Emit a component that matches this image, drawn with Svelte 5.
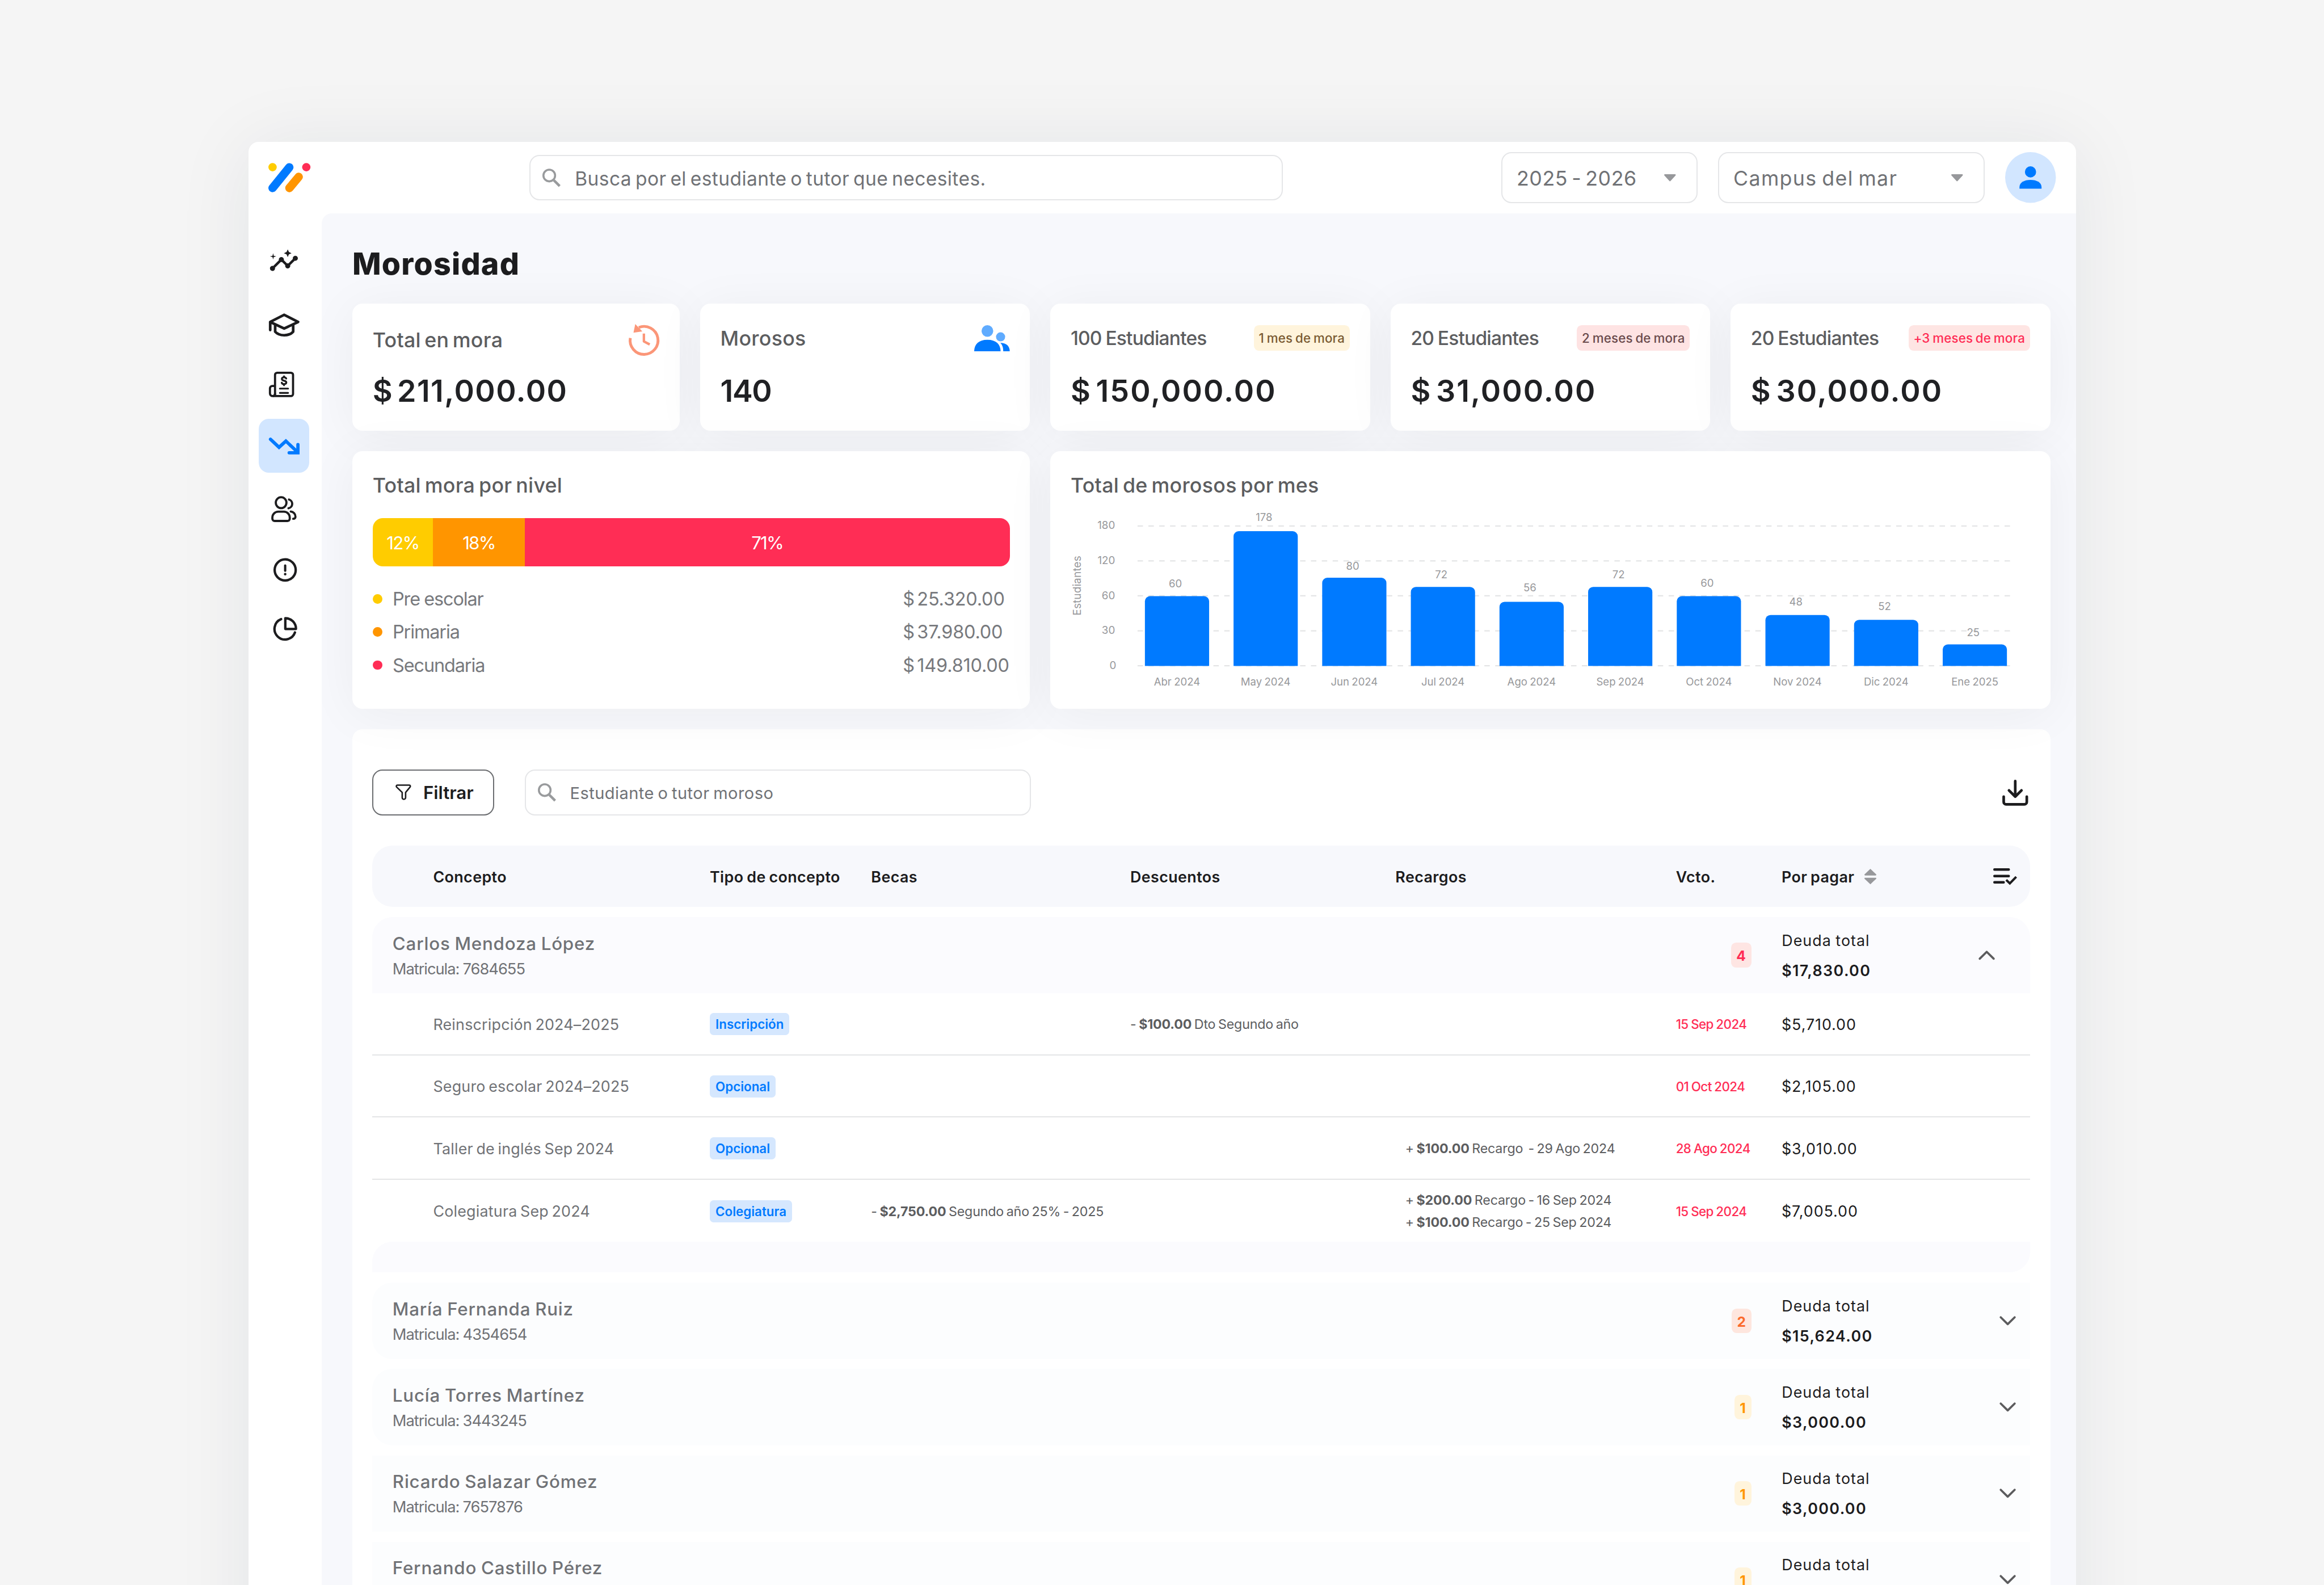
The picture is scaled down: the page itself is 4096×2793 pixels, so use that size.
<script lang="ts">
  /**
   * Morosidad: overdue payments dashboard.
   * Sizes are in rem, where 1rem = 10 design units.
   */
  interface Charge {
    concept: string;
    type: string;
    scholarship?: [string, string];
    discount?: [string, string];
    surcharges?: [string, string][];
    due: string;
    amount: string;
  }

  interface Debtor {
    name: string;
    id: string;
    count: number;
    level: 'high' | 'mid' | 'low';
    total: string;
    shape: 'open' | 'left' | 'square';
    charges?: Charge[];
  }

  const navItems = [
    { name: 'insights', viewBox: '0.2 1.9 24 24' },
    { name: 'students', viewBox: '0.1 -3.7 24 24' },
    { name: 'billing', viewBox: '0.1 -1.7 24 24' },
    { name: 'overdue', viewBox: '0.15 -5.35 24 24' },
    { name: 'users', viewBox: '-1.9 -3.75 24 24' },
    { name: 'alerts', viewBox: '-3.5 -4.8 24 24' },
    { name: 'reports', viewBox: '-3.5 -2.7 24 24' }
  ];
  const active = 'overdue';

  const buckets = [
    { students: '100 Estudiantes', badge: '1 mes de mora', tone: 'low', value: '$ 150,000.00' },
    { students: '20 Estudiantes', badge: '2 meses de mora', tone: 'mid', value: '$ 31,000.00' },
    { students: '20 Estudiantes', badge: '+3 meses de mora', tone: 'high', value: '$ 30,000.00' }
  ];

  const levels = [
    { name: 'Pre escolar', share: '12%', width: 9.48, color: '#ffcc00', value: '$ 25.320.00' },
    { name: 'Primaria', share: '18%', width: 14.38, color: '#ff9500', value: '$ 37.980.00' },
    { name: 'Secundaria', share: '71%', width: 76.14, color: '#ff2d55', value: '$ 149.810.00' }
  ];

  const ticks = [180, 120, 60, 30, 0];
  const months = [
    { label: 'Abr 2024', value: 60, height: 55, lift: 7 },
    { label: 'May 2024', value: 178, height: 106.2, lift: 7.9 },
    { label: 'Jun 2024', value: 80, height: 69.5, lift: 6.4 },
    { label: 'Jul 2024', value: 72, height: 62.3, lift: 6.8 },
    { label: 'Ago 2024', value: 56, height: 50.6, lift: 8 },
    { label: 'Sep 2024', value: 72, height: 62.3, lift: 6.8 },
    { label: 'Oct 2024', value: 60, height: 55, lift: 7.2 },
    { label: 'Nov 2024', value: 48, height: 40.2, lift: 7.5 },
    { label: 'Dic 2024', value: 52, height: 36.4, lift: 7.8 },
    { label: 'Ene 2025', value: 25, height: 17, lift: 6.6 }
  ];
  const baseY = 130.8;
  const barX = (i: number) => 58.5 + i * 69.85;
  const barPath = (x: number, h: number) =>
    `M${x} ${baseY}V${baseY - h + 4}a4 4 0 0 1 4-4h42.6a4 4 0 0 1 4 4V${baseY}z`;

  const debtors: Debtor[] = [
    {
      name: 'Carlos Mendoza López',
      id: '7684655',
      count: 4,
      level: 'high',
      total: '$17,830.00',
      shape: 'open',
      charges: [
        { concept: 'Reinscripción 2024–2025', type: 'Inscripción', discount: ['$100.00', 'Dto Segundo año'], due: '15 Sep 2024', amount: '$5,710.00' },
        { concept: 'Seguro escolar 2024–2025', type: 'Opcional', due: '01 Oct 2024', amount: '$2,105.00' },
        { concept: 'Taller de inglés Sep 2024', type: 'Opcional', surcharges: [['$100.00', 'Recargo  - 29 Ago 2024']], due: '28 Ago 2024', amount: '$3,010.00' },
        {
          concept: 'Colegiatura Sep 2024',
          type: 'Colegiatura',
          scholarship: ['$2,750.00', 'Segundo año 25% - 2025'],
          surcharges: [['$200.00', 'Recargo - 16 Sep 2024'], ['$100.00', 'Recargo - 25 Sep 2024']],
          due: '15 Sep 2024',
          amount: '$7,005.00'
        }
      ]
    },
    { name: 'María Fernanda Ruiz', id: '4354654', count: 2, level: 'mid', total: '$15,624.00', shape: 'left' },
    { name: 'Lucía Torres Martínez', id: '3443245', count: 1, level: 'low', total: '$3,000.00', shape: 'left' },
    { name: 'Ricardo Salazar Gómez', id: '7657876', count: 1, level: 'low', total: '$3,000.00', shape: 'square' },
    { name: 'Fernando Castillo Pérez', id: '7657321', count: 1, level: 'low', total: '$3,000.00', shape: 'square' }
  ];
</script>

{#snippet searchIcon()}
  <svg class="icon-search" viewBox="0 0 14.4 14.4" fill="none" stroke="currentColor">
    <circle cx="5.4" cy="5.5" r="4.6" stroke-width="1.6" />
    <path d="M9 9.2l4.6 4.6" stroke-width="2" />
  </svg>
{/snippet}

{#snippet caret()}
  <svg class="icon-caret" viewBox="0 0 9.2 5.6" fill="currentColor">
    <path d="M.6 0h8c.5 0 .8.6.4 1L5.1 5.3a.7.7 0 0 1-1 0L.2 1C-.2.6.1 0 .6 0z" />
  </svg>
{/snippet}

<div class="page">
  <div class="shell">
    <header class="topbar">
      <svg class="logo" viewBox="0 0 33.2 23.2" fill="none" stroke-linecap="round" stroke-width="6.6">
        <circle cx="3.3" cy="3.4" r="3.3" fill="#ffcc00" />
        <path d="M16.5 3.5L3.3 19.8" stroke="#007aff" />
        <path d="M23.9 11L16.6 19.8" stroke="#ff9500" />
        <circle cx="29.9" cy="3.4" r="3.3" fill="#ff2d55" />
      </svg>
      <div class="field search">
        {@render searchIcon()}
        <span>Busca por el estudiante o tutor que necesites.</span>
      </div>
      <div class="topbar-right">
        <div class="field select year"><span>2025 - 2026</span>{@render caret()}</div>
        <div class="field select campus"><span>Campus del mar</span>{@render caret()}</div>
        <svg class="avatar" viewBox="0 0 40 40">
          <circle cx="20" cy="20" r="20" fill="#d2e6ff" />
          <circle cx="20" cy="15.6" r="4.4" fill="#007aff" />
          <path d="M11.3 28.8v-1.2c0-3.6 3.7-5.7 8.7-5.7s8.7 2.1 8.7 5.7v1.2z" fill="#007aff" />
        </svg>
      </div>
    </header>

    <div class="body">
      <nav class="sidebar">
        {#each navItems as item}
          <div class="nav-item" class:active={item.name === active}>
            <svg viewBox={item.viewBox} fill="none" stroke="currentColor" stroke-linecap="round">
              {#if item.name === 'insights'}
                <g fill="currentColor" stroke="none">
                  <path d="M21 8c-1.45 0-2.26 1.44-1.93 2.51l-3.55 3.56c-.3-.09-.74-.09-1.04 0l-2.55-2.55C12.27 10.45 11.46 9 10 9c-1.45 0-2.27 1.44-1.93 2.52l-4.56 4.55C2.44 15.74 1 16.55 1 18c0 1.1.9 2 2 2 1.45 0 2.26-1.44 1.93-2.51l4.55-4.56c.3.09.74.09 1.04 0l2.55 2.55C12.73 16.55 13.54 18 15 18c1.45 0 2.27-1.44 1.93-2.52l3.56-3.55C21.56 12.26 23 11.45 23 10c0-1.1-.9-2-2-2z" />
                  <path d="M15 9l.94-2.07L18 6l-2.06-.93L15 3l-.92 2.07L12 6l2.08.93z" />
                  <path d="M3.5 11L4 9l2-.5L4 8l-.5-2L3 8l-2 .5L3 9z" />
                </g>
              {:else if item.name === 'students'}
                <g stroke-width="2.1" stroke-linejoin="round">
                  <path d="M12.1 1.1L23.1 6.7 12.1 11.9 1.1 6.7zM1.1 6.9v6.2" />
                  <path d="M5 9v5.4c1.6 1.8 4 2.8 7.1 2.8s5.5-1 7.1-2.8V9" stroke-linecap="butt" />
                </g>
              {:else if item.name === 'billing'}
                <g stroke-width="1.7" stroke-linejoin="round">
                  <path d="M4.9 19.2V2.6A1.7 1.7 0 0 1 6.6.9h10.8a1.7 1.7 0 0 1 1.7 1.7v15a1.7 1.7 0 0 1-1.7 1.7H3a2.1 2.1 0 0 1-2.1-2.1v-4a1.9 1.9 0 0 1 1.9-1.9h2.1" />
                  <path d="M4.9 17.5a2 2 0 0 1-1.2 1.7" />
                  <path d="M8.7 13.4h6.5M8.7 16.8h6.5" stroke-width="1.4" />
                  <path d="M13.7 5.4c-.3-.6-.9-.9-1.7-.9-1 0-1.7.5-1.7 1.3 0 1.9 3.5.9 3.5 2.8 0 .8-.8 1.3-1.8 1.3-.9 0-1.6-.4-1.8-1.1M12 3.7v.8M12 9.9v.8" stroke-width="1.5" />
                </g>
              {:else if item.name === 'overdue'}
                <g stroke-width="2.6">
                  <path d="M1.4 1.4L8.1 7.7l5.4-4.9L22.7 11.5" />
                  <path d="M23 5.6V12H16.1" />
                </g>
              {:else if item.name === 'users'}
                <g stroke-width="1.7">
                  <ellipse cx="7.7" cy="5.1" rx="4.2" ry="4.3" />
                  <path d="M13.9 2.6a3.55 3.55 0 0 1-.4 6.9" />
                  <path d="M5.4 12.2h4.5a4.6 4.6 0 0 1 4.6 4.6v.9a1.8 1.8 0 0 1-1.8 1.8H2.6a1.8 1.8 0 0 1-1.8-1.8v-.9a4.6 4.6 0 0 1 4.6-4.6z" />
                  <path d="M15.3 12.1a4 4 0 0 1 3.7 4v.2a1.5 1.5 0 0 1-1.5 1.5h-.3" />
                </g>
              {:else if item.name === 'alerts'}
                <circle cx="9.3" cy="9.2" r="8.3" stroke-width="1.9" />
                <path d="M9.3 5.7v4.1" stroke-width="1.8" />
                <circle cx="9.3" cy="12.5" r="1" fill="currentColor" stroke="none" />
              {:else}
                <g stroke-width="1.9">
                  <path d="M6.1 1.8A8.3 8.3 0 1 0 17 12.3" />
                  <path d="M9.4 1v8.5h8.4A8.4 8.4 0 0 0 9.4 1z" stroke-linejoin="round" />
                </g>
              {/if}
            </svg>
          </div>
        {/each}
      </nav>

      <main class="content">
        <h1>Morosidad</h1>

        <section class="summary">
          <div class="stats">
            <div class="card stat">
              <div class="card-head">
                <span class="label">Total en mora</span>
                <svg class="icon-history" viewBox="0 0 24.4 25.2" fill="none" stroke="#fb9678">
                  <path d="M1.3 11A11 11 0 1 0 8 2.7" stroke-width="2.2" />
                  <path d="M5.2 0l5.6 5.8-7 1z" fill="#fb9678" stroke="none" />
                  <path d="M12 7.5v6.2l4.6 2.4" stroke-width="1.9" stroke-linejoin="round" />
                </svg>
              </div>
              <div class="value">$ 211,000.00</div>
            </div>
            <div class="card stat">
              <div class="card-head">
                <span class="label">Morosos</span>
                <svg class="icon-people" viewBox="0 0 28.1 20.6">
                  <circle cx="10.4" cy="4.6" r="4.6" fill="#5fabff" />
                  <circle cx="20.8" cy="9.2" r="3.6" fill="#5fabff" />
                  <path d="M0 20.6c0-5.6 3.5-9.1 10.4-9.1s10.4 3.5 10.4 9.1z" fill="#007aff" />
                  <path d="M20.6 13.9c4.7.2 7.4 2.4 7.4 6.7h-5.1c0-3-.7-5-2.3-6.7z" fill="#007aff" />
                </svg>
              </div>
              <div class="value count">140</div>
            </div>
          </div>

          <div class="buckets">
            {#each buckets as b}
              <div class="card bucket">
                <div class="card-head">
                  <span class="label">{b.students}</span>
                  <span class="badge {b.tone}">{b.badge}</span>
                </div>
                <div class="value">{b.value}</div>
              </div>
            {/each}
          </div>

          <div class="card level-card">
            <h2>Total mora por nivel</h2>
            <div class="level-bar">
              {#each levels as l}
                <div class="segment" style="width: {l.width}%; background: {l.color}">{l.share}</div>
              {/each}
            </div>
            <ul class="legend">
              {#each levels as l}
                <li>
                  <i style="background: {l.color}"></i>
                  <span class="legend-name">{l.name}</span>
                  <span class="legend-value">{l.value}</span>
                </li>
              {/each}
            </ul>
          </div>

          <div class="card chart-card">
            <h2>Total de morosos por mes</h2>
            <svg class="chart" viewBox="0 0 756 152">
              <text class="axis-title" transform="translate(8.1 67.5) rotate(-90)">Estudiantes</text>
              {#each ticks as tick, i}
                <line x1="52.7" x2="741.7" y1={20.5 + i * 27.52} y2={20.5 + i * 27.52} />
                <text class="tick" x={tick === 0 ? 35.9 : 35} y={23 + i * 27.52}>{tick}</text>
              {/each}
              {#each months as m, i}
                <path d={barPath(barX(i), m.height)} fill="#007aff" />
                <text x={barX(i) + 24} y={baseY - m.height - m.lift}>{m.value}</text>
                <text x={barX(i) + 25.3} y="146.2">{m.label}</text>
              {/each}
            </svg>
          </div>
        </section>

        <section class="panel">
          <div class="toolbar">
            <button class="filter">
              <svg viewBox="0 0 12.4 12.6" fill="none" stroke="currentColor" stroke-width="1.15" stroke-linejoin="round">
                <path d="M1.5.7h9.4c.8 0 1.1.9.6 1.5L8 6.4v4.1c0 .6-.3 1-.8 1.2-.9.4-1.9-.2-1.9-1.2V6.4L.9 2.2C.4 1.6.7.7 1.5.7z" />
              </svg>
              <span>Filtrar</span>
            </button>
            <div class="field table-search">
              {@render searchIcon()}
              <span>Estudiante o tutor moroso</span>
            </div>
            <svg class="icon-download" viewBox="0 0 20.4 20.4" fill="none" stroke="currentColor" stroke-width="2.1" stroke-linecap="round" stroke-linejoin="round">
              <path d="M10.2 1.1v12M5.3 8.4l4.9 4.9 4.9-4.9" />
              <path d="M1.1 13.3v4.2a1.9 1.9 0 0 0 1.9 1.9h14.4a1.9 1.9 0 0 0 1.9-1.9v-4.2" />
            </svg>
          </div>

          <div class="row table-head">
            <span>Concepto</span>
            <span>Tipo de concepto</span>
            <span>Becas</span>
            <span>Descuentos</span>
            <span>Recargos</span>
            <span>Vcto.</span>
            <span class="last-head">
              Por pagar
              <svg class="icon-sort" viewBox="0 0 9.4 12.2" fill="#97989b">
                <path d="M4.7 0l4.5 4.3c.4.4.1.9-.4.9H.6c-.5 0-.8-.5-.4-.9z" />
                <path d="M4.7 12.2L.2 7.9C-.2 7.5.1 7 .6 7h8.2c.5 0 .8.5.4.9z" />
              </svg>
              <svg class="icon-columns" viewBox="0 0 18.4 13" fill="none" stroke="currentColor" stroke-width="2" stroke-linecap="round">
                <path d="M1 1h11.2M1 6.1h11.2M1 11.1h7.2" />
                <path d="M10.9 9.8l2.2 2.1 4.4-4.5" stroke-linecap="square" stroke-width="1.8" />
              </svg>
            </span>
          </div>

          {#each debtors as d}
            <div class="debtor {d.shape}">
              <div class="debtor-info">
                <div class="name">{d.name}</div>
                <div class="enrollment">Matricula: {d.id}</div>
              </div>
              <span class="count-badge {d.level}">{d.count}</span>
              <div class="debt-cell">
                <div class="debt">
                  <div>Deuda total</div>
                  <strong>{d.total}</strong>
                </div>
                <svg class="chevron" viewBox="0 0 13 7.4" fill="none" stroke="#5c5c5e" stroke-width="1.7" stroke-linecap="round" stroke-linejoin="round">
                  <path d={d.charges ? 'M1 6.4L6.5 1 12 6.4' : 'M1 1l5.5 5.4L12 1'} />
                </svg>
              </div>
            </div>
            {#if d.charges}
              {#each d.charges as c}
                <div class="row charge">
                  <span>{c.concept}</span>
                  <span><em class="type">{c.type}</em></span>
                  <span class="note">
                    {#if c.scholarship}<span>- <b>{c.scholarship[0]}</b> {c.scholarship[1]}</span>{/if}
                  </span>
                  <span class="note">
                    {#if c.discount}<span>- <b>{c.discount[0]}</b> {c.discount[1]}</span>{/if}
                  </span>
                  <span class="note surcharges">
                    {#each c.surcharges ?? [] as s}<span>+ <b>{s[0]}</b> {s[1]}</span>{/each}
                  </span>
                  <span class="due">{c.due}</span>
                  <span class="amount">{c.amount}</span>
                </div>
              {/each}
              <div class="group-end"></div>
            {/if}
          {/each}
        </section>
      </main>
    </div>
  </div>
</div>

<style>
  :global(html) {
    font-size: 22.368px;
  }

  :global(body) {
    margin: 0;
    overflow: hidden;
  }

  .page {
    box-sizing: border-box;
    height: 100vh;
    padding: 11.19rem 0 0 19.56rem;
    overflow: hidden;
    background: #f5f5f5;
    font-family: Inter, 'Open Sans', sans-serif;
    color: #1c1c1e;
  }

  .page :global(*) {
    box-sizing: border-box;
  }

  svg {
    display: block;
    flex: none;
    overflow: visible;
  }

  .shell {
    width: 144rem;
    height: 125rem;
    border-radius: 0.8rem;
    background: #fff;
    box-shadow: 0 0.4rem 6rem rgba(25, 40, 60, 0.08);
  }

  /* Top bar */
  .topbar {
    display: flex;
    align-items: center;
    height: 5.6rem;
    padding: 0 1.57rem 0 1.58rem;
  }

  .logo {
    width: 3.32rem;
    height: 2.32rem;
  }

  .field {
    display: flex;
    align-items: center;
    border: 0.1rem solid #e5e6e8;
    border-radius: 0.8rem;
    color: #707276;
    white-space: nowrap;
  }

  .field span {
    padding-top: 0.1rem;
  }

  .search {
    width: 59.35rem;
    height: 3.6rem;
    margin-left: 17.26rem;
    padding-left: 0.95rem;
    gap: 1.1rem;
    font-size: 1.5rem;
    letter-spacing: 0.018rem;
    word-spacing: -0.13rem;
  }

  .icon-search {
    width: 1.44rem;
    height: 1.44rem;
    color: #999b9d;
  }

  .topbar-right {
    display: flex;
    align-items: center;
    gap: 1.62rem;
    margin-left: auto;
  }

  .select {
    justify-content: space-between;
    height: 4rem;
    padding: 0 1.6rem 0 1.12rem;
    font-size: 1.6rem;
  }

  .year {
    width: 15.46rem;
    letter-spacing: 0.025rem;
    word-spacing: -0.16rem;
  }

  .campus {
    width: 21rem;
    letter-spacing: 0.06rem;
    word-spacing: -0.12rem;
  }

  .icon-caret {
    width: 0.92rem;
    height: 0.56rem;
    color: #97989b;
  }

  .avatar {
    width: 4rem;
    height: 4rem;
  }

  /* Sidebar */
  .body {
    display: flex;
    height: 119.4rem;
  }

  .sidebar {
    display: flex;
    flex-direction: column;
    gap: 0.57rem;
    width: 5.8rem;
    padding: 1.815rem 0 0 0.82rem;
  }

  .nav-item {
    display: flex;
    align-items: center;
    justify-content: center;
    width: 4rem;
    height: 4.23rem;
    border-radius: 0.8rem;
  }

  .nav-item svg {
    width: 2.4rem;
    height: 2.4rem;
  }

  .nav-item.active {
    background: #d2e6ff;
    color: #007aff;
  }

  /* Content */
  .content {
    flex: 1;
    min-width: 0;
    padding: 2.37rem 2rem 0 2.4rem;
    overflow: hidden;
    border-top-left-radius: 0.8rem;
    background: #f7f8fc;
  }

  h1 {
    margin: 0 0 1.57rem;
    font-size: 2.4rem;
    font-weight: 800;
    line-height: 3.2rem;
    letter-spacing: 0.055rem;
  }

  h2 {
    margin: 0;
    font-size: 1.6rem;
    font-weight: 500;
    line-height: 2.24rem;
    letter-spacing: 0.012rem;
    word-spacing: -0.13rem;
    color: #5c5d5f;
  }

  .summary {
    display: grid;
    grid-template-columns: 53.4rem 78.8rem;
    grid-template-rows: 10rem 20.3rem;
    gap: 1.6rem;
  }

  .stats {
    display: grid;
    grid-template-columns: 25.8rem 26rem;
    gap: 1.6rem;
  }

  .buckets {
    display: grid;
    grid-template-columns: repeat(3, 1fr);
    gap: 1.6rem;
  }

  .card {
    padding: 1.6rem;
    border-radius: 0.8rem;
    background: #fff;
    box-shadow: 0 0.4rem 4rem rgba(30, 30, 12, 0.052);
  }

  .stat,
  .bucket {
    display: flex;
    flex-direction: column;
    justify-content: space-between;
  }

  .card-head {
    display: flex;
    align-items: center;
    justify-content: space-between;
    min-height: 2.2rem;
    white-space: nowrap;
  }

  .label {
    font-size: 1.6rem;
    font-weight: 500;
    letter-spacing: 0.012rem;
    word-spacing: -0.15rem;
    color: #5c5d5f;
  }

  .bucket .label {
    font-size: 1.5rem;
    letter-spacing: -0.037rem;
    word-spacing: -0.06rem;
  }

  .value {
    font-size: 2.4rem;
    font-weight: 600;
    line-height: 3.1rem;
    letter-spacing: 0.066rem;
    word-spacing: -0.36rem;
    color: #202124;
  }

  .bucket .value {
    letter-spacing: 0.094rem;
  }

  .value.count {
    letter-spacing: -0.06rem;
  }

  .icon-history {
    width: 2.44rem;
    height: 2.52rem;
  }

  .icon-people {
    width: 2.81rem;
    height: 2.06rem;
  }

  .badge {
    height: 2rem;
    padding: 0 0.4rem;
    border-radius: 0.4rem;
    font-size: 1rem;
    font-weight: 500;
    line-height: 2.06rem;
    letter-spacing: 0.006rem;
    word-spacing: -0.06rem;
  }

  .badge.low {
    background: #fff4dc;
    color: #7a5a32;
  }

  .badge.mid {
    background: #fee3e3;
    color: #6a4a4c;
  }

  .badge.high {
    background: #fee5e3;
    color: #ff2d55;
  }

  /* Debt by level */
  .level-bar {
    display: flex;
    height: 3.8rem;
    margin-top: 1.47rem;
    overflow: hidden;
    border-radius: 0.8rem;
  }

  .segment {
    font-size: 1.4rem;
    line-height: 3.95rem;
    letter-spacing: -0.08rem;
    text-align: center;
    color: #fff;
  }

  .legend {
    margin: 1.26rem 0 0;
    padding: 0;
    list-style: none;
  }

  .legend li {
    display: flex;
    align-items: center;
    height: 2.6rem;
    font-size: 1.45rem;
    color: #77797d;
  }

  .legend i {
    width: 0.76rem;
    height: 0.76rem;
    margin-right: 0.82rem;
    border-radius: 50%;
  }

  .legend-name {
    flex: 1;
    letter-spacing: -0.05rem;
    word-spacing: -0.03rem;
  }

  .legend-value {
    width: 8.42rem;
    letter-spacing: -0.008rem;
    word-spacing: -0.2rem;
    white-space: nowrap;
  }

  /* Chart */
  .chart {
    width: 75.6rem;
    height: 15.2rem;
  }

  .chart line {
    stroke: #e4e5e6;
    stroke-dasharray: 4.27 4.27;
  }

  .chart text {
    font-size: 8.3px;
    text-anchor: middle;
    word-spacing: -0.4px;
    fill: #97989b;
  }

  .chart .tick {
    font-size: 8.4px;
    text-anchor: end;
  }

  .chart .axis-title {
    font-size: 8.6px;
  }

  /* Table */
  .panel {
    height: 80rem;
    margin-top: 1.6rem;
    padding: 3.2rem 1.59rem 0;
    border-radius: 0.8rem;
    background: #fff;
  }

  .toolbar {
    display: flex;
    align-items: center;
    height: 3.6rem;
    margin-bottom: 2.4rem;
  }

  .filter {
    display: flex;
    align-items: center;
    width: 9.6rem;
    height: 3.6rem;
    padding: 0 0 0 1.72rem;
    gap: 0.95rem;
    border: 0.1rem solid #6b6d70;
    border-radius: 0.8rem;
    background: #fff;
    font: 600 1.4rem Inter, sans-serif;
    color: #1c1c1e;
  }

  .filter span {
    padding-top: 0.1rem;
  }

  .filter svg {
    width: 1.24rem;
    height: 1.26rem;
  }

  .table-search {
    width: 39.9rem;
    height: 3.6rem;
    margin-left: 2.4rem;
    padding-left: 0.95rem;
    gap: 1.08rem;
    font-size: 1.3rem;
    letter-spacing: 0.02rem;
    word-spacing: -0.09rem;
  }

  .icon-download {
    width: 2.04rem;
    height: 2.04rem;
    margin: 0 0.16rem 0 auto;
  }

  .row {
    display: grid;
    grid-template-columns: 21.8rem 12.71rem 20.42rem 20.89rem 22.1rem 8.33rem 1fr;
    align-items: center;
    padding: 0.08rem 0 0 4.78rem;
    white-space: nowrap;
  }

  .table-head {
    height: 4.8rem;
    margin-bottom: 0.82rem;
    border-radius: 1.6rem;
    background: #f7f8fc;
    font-size: 1.2rem;
    font-weight: 600;
    letter-spacing: 0.018rem;
    word-spacing: -0.06rem;
  }

  .last-head {
    display: flex;
    align-items: center;
  }

  .icon-sort {
    width: 0.94rem;
    height: 1.22rem;
    margin-left: 0.8rem;
  }

  .icon-columns {
    width: 1.84rem;
    height: 1.3rem;
    margin: 0 1.07rem 0 auto;
  }

  .debtor {
    display: flex;
    align-items: center;
    height: 6rem;
    margin-bottom: 0.8rem;
    padding-left: 1.58rem;
    background: #fcfdfe;
  }

  .debtor.open {
    height: 5.99rem;
    margin-bottom: 0;
    border-radius: 1.6rem 1.6rem 0 0;
    background: #fbfbfe;
  }

  .debtor.left {
    border-radius: 1.6rem 0 0 1.6rem;
  }

  .debtor-info {
    flex: 1;
    padding-top: 0.18rem;
    color: #707276;
  }

  .name {
    font-size: 1.4rem;
    font-weight: 500;
    line-height: 2.02rem;
    letter-spacing: 0.036rem;
    word-spacing: -0.06rem;
  }

  .enrollment {
    font-size: 1.22rem;
    line-height: 1.95rem;
    letter-spacing: -0.045rem;
    word-spacing: -0.02rem;
  }

  .count-badge {
    height: 1.94rem;
    margin-right: 2.4rem;
    padding: 0 0.43rem;
    border-radius: 0.4rem;
    font-size: 1.1rem;
    font-weight: 700;
    line-height: 2.1rem;
  }

  .count-badge.high {
    background: #fee5e3;
    color: #ff2d55;
  }

  .count-badge.mid {
    background: #fee6de;
    color: #fb6a2c;
  }

  .count-badge.low {
    background: #fff4dc;
    color: #ff9500;
  }

  .debt-cell {
    display: flex;
    align-items: center;
    justify-content: space-between;
    width: 19.58rem;
    padding-right: 1.12rem;
  }

  .open .debt-cell {
    padding-right: 2.78rem;
  }

  .debt {
    padding-top: 0.06rem;
    font-size: 1.2rem;
    line-height: 2.37rem;
    letter-spacing: 0.047rem;
    word-spacing: -0.05rem;
  }

  .debt strong {
    display: block;
    font-weight: 600;
    letter-spacing: 0.062rem;
  }

  .chevron {
    width: 1.3rem;
    height: 0.74rem;
  }

  .charge {
    height: 4.9rem;
    border-bottom: 0.1rem solid #e4e5e6;
    font-size: 1.2rem;
    letter-spacing: 0.01rem;
    word-spacing: -0.1rem;
    color: #707276;
  }

  .charge:has(+ .group-end) {
    border-bottom: 0;
  }

  .type {
    display: inline-block;
    padding: 0 0.45rem;
    border-radius: 0.3rem;
    background: #d5e7fe;
    font-size: 1rem;
    font-style: normal;
    font-weight: 600;
    line-height: 1.75rem;
    letter-spacing: 0;
    color: #007aff;
    vertical-align: middle;
  }

  .note {
    display: flex;
    flex-direction: column;
    font-size: 1.04rem;
    line-height: 1.75rem;
    letter-spacing: -0.008rem;
    word-spacing: -0.08rem;
    color: #5c5d5f;
    white-space: pre;
  }

  .surcharges {
    padding-left: 0.78rem;
  }

  .due {
    font-size: 1rem;
    font-weight: 500;
    letter-spacing: -0.025rem;
    word-spacing: -0.04rem;
    color: #ff2d55;
  }

  .amount {
    letter-spacing: 0.042rem;
    color: #1c1c1e;
  }

  .group-end {
    height: 2.42rem;
    margin-bottom: 0.8rem;
    border-radius: 1.6rem 0 1.6rem 0;
    background: #fbfbfe;
  }
</style>
